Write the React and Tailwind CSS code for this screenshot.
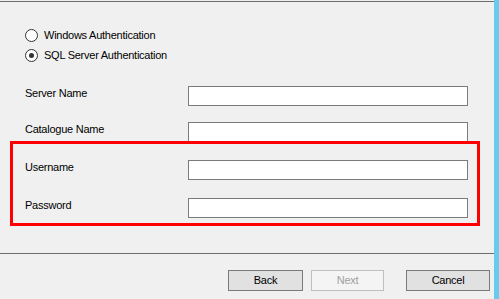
import React from 'react';

function Radio({ label, checked }) {
  return (
    <div className="flex items-center h-[13px] pl-[25px]">
      <span className="w-[13px] h-[13px] rounded-full border border-[#333333] bg-white flex items-center justify-center">
        {checked && <span className="w-[5px] h-[5px] rounded-full bg-[#333333]" />}
      </span>
      <span className="ml-[6px] leading-[13px]">{label}</span>
    </div>
  );
}

function Field({ label, className }) {
  return (
    <div className={`flex items-start ${className || ''}`}>
      <span className="w-[163px] leading-[13px] mt-[1px]">{label}</span>
      <div className="w-[280px] h-[20px] border border-[#7a7a7a] bg-white" />
    </div>
  );
}

function Button({ children, disabled, className }) {
  return (
    <div
      className={`h-[21px] flex items-center justify-center border ${
        disabled
          ? 'border-[#bfbfbf] bg-[#f4f4f4] text-[#a0a0a0]'
          : 'border-[#7a7a7a] bg-[#e1e1e1] text-black'
      } ${className}`}
    >
      {children}
    </div>
  );
}

export default function App() {
  return (
    <div className="w-[499px] h-[299px] flex overflow-hidden font-['Liberation_Sans',Arial,sans-serif] text-[11px] tracking-[-0.25px] text-black">
      <div className="w-[494px] flex flex-col bg-[#f0f0f0]">
        <div className="h-px mt-px bg-[#6d6d6d]" />

        <div className="mt-[27px] flex flex-col gap-[7px]">
          <Radio label="Windows Authentication" />
          <Radio label="SQL Server Authentication" checked />
        </div>

        <div className="mt-[24px] pl-[25px]">
          <Field label="Server Name" />
          <Field label="Catalogue Name" className="mt-[16px]" />
        </div>

        <div className="mt-[-1px] ml-[10px] w-[470px] border-[3px] border-[#ff0000] pt-[16px] pb-[5px] pl-[12px]">
          <Field label="Username" />
          <Field label="Password" className="mt-[18px]" />
        </div>

        <div className="mt-[27px] h-px bg-[#6d6d6d]" />

        <div className="mt-[16px] flex">
          <Button className="ml-[228px] w-[75px]">Back</Button>
          <Button disabled className="ml-[8px] w-[73px]">Next</Button>
          <Button className="ml-[22px] w-[84px]">Cancel</Button>
        </div>
      </div>
      <div className="w-[5px] bg-[#66cbef]" />
    </div>
  );
}
